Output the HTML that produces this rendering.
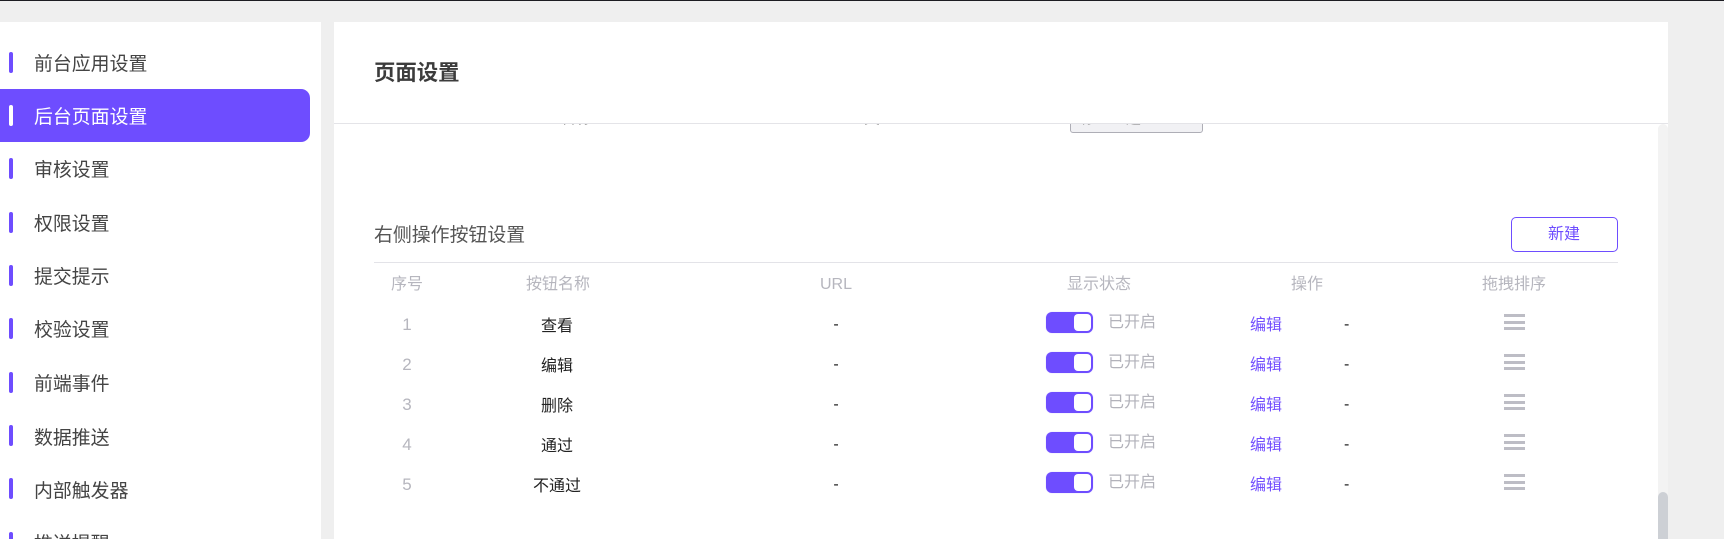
<!DOCTYPE html>
<html lang="zh-CN">
<head>
<meta charset="utf-8">
<title>页面设置</title>
<style>
html,body{margin:0;padding:0;width:1724px;height:539px;overflow:hidden;background:#efefef;}
#wrap{position:relative;width:1724px;height:539px;overflow:hidden;background:#efefef;font-family:"Liberation Sans","Noto Sans CJK SC",sans-serif;}
.a{position:absolute;}
.t{position:absolute;white-space:nowrap;height:28px;line-height:28px;}
.c{text-align:center;width:200px;}
#top{left:0;top:0;width:1724px;height:1px;background:#1c1c22;}
#side{left:0;top:22px;width:321px;height:517px;background:#fff;overflow:hidden;}
#main{left:334px;top:22px;width:1334px;height:517px;background:#fff;}
.active{left:0;top:89px;width:310px;height:53px;background:#6e4dff;border-radius:0 9px 9px 0;}
.bar{position:absolute;left:9px;width:4px;height:21px;background:#6e4dff;border-radius:2px;}
.nav{position:absolute;left:34px;font-size:18.9px;color:#444;white-space:nowrap;height:30px;line-height:30px;}
.h{font-size:16px;color:#b6b6be;}
.n{font-size:17px;color:#b6b6be;}
.d{font-size:16px;color:#222;}
.l{font-size:16px;color:#b2b2ba;}
.e{font-size:16px;color:#7350ff;}
.tg{position:absolute;left:1046px;width:47px;height:21px;background:#6e4dff;border-radius:6px;box-shadow:0 0 1px #c9bdff;}
.tg i{position:absolute;left:28px;top:2px;width:17px;height:17px;background:#fff;border-radius:4px;display:block;}
.hb{position:absolute;left:1504px;width:21px;height:3px;background:#bdbdc5;}
</style>
</head>
<body>
<div id="wrap">
<div class="a" id="top"></div>
<div class="a" id="side"></div>
<div class="a" id="main"></div>

<!-- sidebar -->
<div class="a active"></div>
<div class="bar" style="top:52px"></div>
<div class="bar" style="top:105px;background:#fff"></div>
<div class="bar" style="top:158px"></div>
<div class="bar" style="top:212px"></div>
<div class="bar" style="top:265px"></div>
<div class="bar" style="top:318px"></div>
<div class="bar" style="top:372px"></div>
<div class="bar" style="top:425px"></div>
<div class="bar" style="top:478px"></div>
<div class="bar" style="top:532px"></div>
<div class="nav" style="top:50px">前台应用设置</div>
<div class="nav" style="top:103px;color:#fff">后台页面设置</div>
<div class="nav" style="top:156px">审核设置</div>
<div class="nav" style="top:210px">权限设置</div>
<div class="nav" style="top:263px">提交提示</div>
<div class="nav" style="top:316px">校验设置</div>
<div class="nav" style="top:370px">前端事件</div>
<div class="nav" style="top:424px">数据推送</div>
<div class="nav" style="top:477px">内部触发器</div>
<div class="nav" style="top:530px;height:9px;overflow:visible">推送提醒</div>

<!-- clipped scrolled content -->
<div class="a" style="left:334px;top:124px;width:1324px;height:12px;overflow:hidden">
  <div class="t" style="left:226px;top:-19px;font-size:16px;color:#555">名称</div>
  <div class="t" style="left:530px;top:-19px;font-size:16px;color:#555">类型</div>
  <div class="a" style="left:736px;top:-20px;width:131px;height:27px;background:#f1f1f4;border:1px solid #aeaeb6;border-radius:3px"></div>
  <div class="t" style="left:746px;top:-19px;font-size:15px;color:#777">标</div>
  <div class="t" style="left:792px;top:-19px;font-size:15px;color:#777">题</div>
</div>

<!-- header -->
<div class="t" style="left:374px;top:59px;font-size:21.4px;font-weight:700;color:#3c3c3c">页面设置</div>
<div class="a" style="left:334px;top:123px;width:1334px;height:1px;background:#e4e4e8"></div>

<!-- scrollbar -->
<div class="a" style="left:1658px;top:124px;width:10px;height:415px;background:#f3f3f3;border-radius:5px 5px 0 0"></div>
<div class="a" style="left:1658px;top:492px;width:10px;height:47px;background:#cdd0d5;border-radius:5px 5px 0 0"></div>

<!-- section title -->
<div class="t" style="left:374px;top:222px;font-size:18.9px;color:#555">右侧操作按钮设置</div>
<div class="a" style="left:1511px;top:217px;width:105px;height:33px;border:1px solid #6e4dff;border-radius:5px"></div>
<div class="t c e" style="left:1464px;top:221px;color:#6e4dff">新建</div>
<div class="a" style="left:374px;top:262px;width:1244px;height:1px;background:#e3e3e8"></div>

<!-- table head -->
<div class="t c h" style="left:307px;top:271px">序号</div>
<div class="t c h" style="left:458px;top:271px">按钮名称</div>
<div class="t c h" style="left:736px;top:271px">URL</div>
<div class="t c h" style="left:999px;top:271px">显示状态</div>
<div class="t c h" style="left:1207px;top:271px">操作</div>
<div class="t c h" style="left:1414px;top:271px">拖拽排序</div>

<!-- row 1 -->
<div class="t c n" style="left:307px;top:311px">1</div>
<div class="t c d" style="left:457px;top:313px">查看</div>
<div class="t c d" style="left:736px;top:311px">-</div>
<div class="tg" style="top:312px"><i></i></div>
<div class="t l" style="left:1108px;top:309px">已开启</div>
<div class="t e" style="left:1250px;top:312px">编辑</div>
<div class="t d" style="left:1344px;top:311px">-</div>
<div class="hb" style="top:314px"></div><div class="hb" style="top:321px"></div><div class="hb" style="top:327px"></div>

<!-- row 2 -->
<div class="t c n" style="left:307px;top:351px">2</div>
<div class="t c d" style="left:457px;top:353px">编辑</div>
<div class="t c d" style="left:736px;top:351px">-</div>
<div class="tg" style="top:352px"><i></i></div>
<div class="t l" style="left:1108px;top:349px">已开启</div>
<div class="t e" style="left:1250px;top:352px">编辑</div>
<div class="t d" style="left:1344px;top:351px">-</div>
<div class="hb" style="top:354px"></div><div class="hb" style="top:361px"></div><div class="hb" style="top:367px"></div>

<!-- row 3 -->
<div class="t c n" style="left:307px;top:391px">3</div>
<div class="t c d" style="left:457px;top:393px">删除</div>
<div class="t c d" style="left:736px;top:391px">-</div>
<div class="tg" style="top:392px"><i></i></div>
<div class="t l" style="left:1108px;top:389px">已开启</div>
<div class="t e" style="left:1250px;top:392px">编辑</div>
<div class="t d" style="left:1344px;top:391px">-</div>
<div class="hb" style="top:394px"></div><div class="hb" style="top:401px"></div><div class="hb" style="top:407px"></div>

<!-- row 4 -->
<div class="t c n" style="left:307px;top:431px">4</div>
<div class="t c d" style="left:457px;top:433px">通过</div>
<div class="t c d" style="left:736px;top:431px">-</div>
<div class="tg" style="top:432px"><i></i></div>
<div class="t l" style="left:1108px;top:429px">已开启</div>
<div class="t e" style="left:1250px;top:432px">编辑</div>
<div class="t d" style="left:1344px;top:431px">-</div>
<div class="hb" style="top:434px"></div><div class="hb" style="top:441px"></div><div class="hb" style="top:447px"></div>

<!-- row 5 -->
<div class="t c n" style="left:307px;top:471px">5</div>
<div class="t c d" style="left:457px;top:473px">不通过</div>
<div class="t c d" style="left:736px;top:471px">-</div>
<div class="tg" style="top:472px"><i></i></div>
<div class="t l" style="left:1108px;top:469px">已开启</div>
<div class="t e" style="left:1250px;top:472px">编辑</div>
<div class="t d" style="left:1344px;top:471px">-</div>
<div class="hb" style="top:474px"></div><div class="hb" style="top:481px"></div><div class="hb" style="top:487px"></div>
</div>
</body>
</html>
